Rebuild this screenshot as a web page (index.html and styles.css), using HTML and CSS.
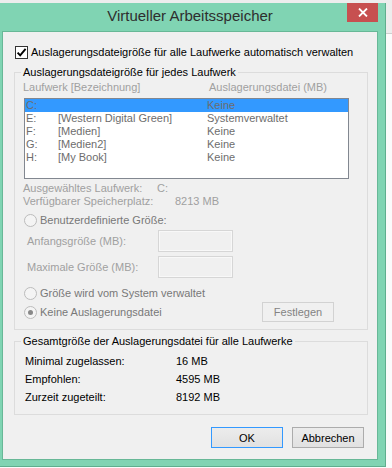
FILE: index.html
```html
<!DOCTYPE html>
<html lang="de">

<head>
    <meta charset="UTF-8">
    <meta name="viewport" content="width=device-width, initial-scale=1.0">
    <title>Virtueller Arbeitsspeicher</title>
    <link rel="stylesheet" href="styles.css">
</head>

<body>
    <div class="window">
        <div class="titlebar">
            <span class="title">Virtueller Arbeitsspeicher</span>
            <button class="close" aria-label="Schließen">
                <svg width="10" height="9" viewBox="0 0 10 9">
                    <path d="M1 0.5 L9 8.5 M9 0.5 L1 8.5" stroke="#fff" stroke-width="1.8" fill="none" />
                </svg>
            </button>
        </div>

        <div class="client">
            <!-- Automatic management -->
            <div class="auto-row">
                <span class="checkbox">
                    <svg width="11" height="11" viewBox="0 0 11 11">
                        <path d="M1.6 5.6 L4.2 8.4 L9.6 1.8" stroke="#000" stroke-width="1.9" fill="none" />
                    </svg>
                </span>
                <span>Auslagerungsdateigröße für alle Laufwerke automatisch verwalten</span>
            </div>

            <!-- Per drive -->
            <fieldset class="group group-drives">
                <legend>Auslagerungsdateigröße für jedes Laufwerk</legend>

                <div class="list-head">
                    <span class="col-drive">Laufwerk [Bezeichnung]</span>
                    <span>Auslagerungsdatei (MB)</span>
                </div>

                <ul class="drive-list">
                    <li class="selected"><span class="letter">C:</span><span class="name"></span><span>Keine</span></li>
                    <li><span class="letter">E:</span><span class="name">[Western Digital Green]</span><span>Systemverwaltet</span></li>
                    <li><span class="letter">F:</span><span class="name">[Medien]</span><span>Keine</span></li>
                    <li><span class="letter">G:</span><span class="name">[Medien2]</span><span>Keine</span></li>
                    <li><span class="letter">H:</span><span class="name">[My Book]</span><span>Keine</span></li>
                </ul>

                <div class="info-row first">
                    <span class="info-label">Ausgewähltes Laufwerk:</span>
                    <span>C:</span>
                </div>
                <div class="info-row">
                    <span class="info-label">Verfügbarer Speicherplatz:</span>
                    <span class="info-space">8213 MB</span>
                </div>

                <div class="radio-row custom">
                    <span class="radio"></span>
                    <span>Benutzerdefinierte Größe:</span>
                </div>
                <div class="size-row first">
                    <span class="size-label">Anfangsgröße (MB):</span>
                    <span class="size-input"></span>
                </div>
                <div class="size-row">
                    <span class="size-label">Maximale Größe (MB):</span>
                    <span class="size-input"></span>
                </div>

                <div class="radio-row system">
                    <span class="radio"></span>
                    <span>Größe wird vom System verwaltet</span>
                </div>
                <div class="radio-row none">
                    <span class="radio checked"></span>
                    <span>Keine Auslagerungsdatei</span>
                    <button class="btn btn-set" disabled>Festlegen</button>
                </div>
            </fieldset>

            <!-- Totals -->
            <fieldset class="group group-total">
                <legend>Gesamtgröße der Auslagerungsdatei für alle Laufwerke</legend>
                <div class="total-row first">
                    <span class="total-label">Minimal zugelassen:</span>
                    <span>16 MB</span>
                </div>
                <div class="total-row">
                    <span class="total-label">Empfohlen:</span>
                    <span>4595 MB</span>
                </div>
                <div class="total-row">
                    <span class="total-label">Zurzeit zugeteilt:</span>
                    <span>8192 MB</span>
                </div>
            </fieldset>

            <div class="actions">
                <button class="btn btn-default">OK</button>
                <button class="btn">Abbrechen</button>
            </div>
        </div>
    </div>
</body>

</html>
```

FILE: styles.css
```css
* {
    box-sizing: border-box;
}

html,
body {
    margin: 0;
}

body {
    width: 392px;
    height: 468px;
    overflow: hidden;
    background: linear-gradient(#ededed 0, #ededed 33px, #cfcfcf 33px, #cfcfcf 34px, #fbfbfb 34px);
    font-family: "Liberation Sans", Arial, sans-serif;
    font-size: 11px;
    color: #000;
}

.window {
    margin-top: 3px;
    width: 386px;
    height: 464px;
    background: #80d4b3;
    border-right: 1px solid #5fae8e;
    border-bottom: 1px solid #5fae8e;
    padding: 0 7px 6px 2px;
    display: flex;
    flex-direction: column;
}

.titlebar {
    height: 28px;
    display: grid;
    grid-template-columns: 1fr auto 1fr;
}

.title {
    grid-column: 2;
    font-size: 15px;
    line-height: 18px;
    padding-top: 4px;
    color: #2e2e2e;
    white-space: nowrap;
}

.close {
    grid-column: 3;
    justify-self: end;
    width: 31px;
    height: 19px;
    border: none;
    padding: 0;
    background: #c75050;
    display: flex;
    align-items: center;
    justify-content: center;
}

.client {
    height: 429px;
    border: 1px solid #68b897;
    background: #f0f0f0;
    padding: 14px 9px 0 11px;
    display: flex;
    flex-direction: column;
}

.auto-row {
    display: flex;
    align-items: center;
    gap: 3px;
    height: 13px;
    line-height: 13px;
    margin-left: 1px;
}

.checkbox {
    width: 13px;
    height: 13px;
    border: 1px solid #333;
    background: #fff;
    display: flex;
}

.group {
    margin: 0;
    min-width: 0;
    border: 1px solid #dcdcdc;
    padding: 0 0 7px 8px;
}

.group legend {
    padding: 0 2px;
    margin-left: -2px;
    line-height: 14px;
}

.group-drives {
    margin-top: 6px;
}

.list-head {
    display: flex;
    height: 13px;
    line-height: 13px;
    margin-top: 2px;
    color: #a0a0a0;
}

.col-drive {
    width: 186px;
}

.drive-list {
    list-style: none;
    margin: 4px 0 0 1px;
    padding: 0;
    width: 325px;
    height: 81px;
    border: 1px solid #828790;
    background: #fff;
    color: #6d6d6d;
}

.drive-list li {
    display: flex;
    height: 13px;
    line-height: 13px;
    padding-left: 1px;
}

.drive-list li.selected {
    background: #3399ff;
}

.drive-list .letter {
    width: 32px;
}

.drive-list .name {
    width: 149px;
}

.info-row {
    display: flex;
    line-height: 13px;
    color: #a0a0a0;
}

.info-row.first {
    margin-top: 3px;
}

.info-label {
    width: 134px;
}

.info-space {
    padding-left: 18px;
}

.radio-row {
    display: flex;
    align-items: center;
    height: 13px;
    line-height: 13px;
    color: #787878;
}

.radio-row.custom {
    margin-top: 6px;
}

.radio-row.system {
    margin-top: 9px;
}

.radio-row.none {
    height: 20px;
    margin-top: 2px;
}

.radio {
    width: 13px;
    height: 13px;
    flex-shrink: 0;
    margin: 0 3px 0 1px;
    border-radius: 50%;
    border: 1px solid #bcbcbc;
    background: #f4f4f4;
    display: flex;
    align-items: center;
    justify-content: center;
}

.radio.checked::after {
    content: "";
    width: 5px;
    height: 5px;
    border-radius: 50%;
    background: #888;
}

.size-row {
    display: flex;
    align-items: center;
    height: 22px;
    margin-top: 4px;
    color: #a0a0a0;
}

.size-row.first {
    margin-top: 3px;
}

.size-label {
    width: 135px;
    padding-left: 4px;
    line-height: 13px;
}

.size-input {
    width: 75px;
    height: 22px;
    border: 1px solid #d6d6d6;
    background: #f0f0f0;
    box-shadow: inset 0 0 0 1px #f8f8f8;
}

.btn {
    width: 72px;
    height: 21px;
    padding: 0;
    font-family: inherit;
    font-size: 11px;
    color: #000;
    border: 1px solid #acacac;
    background: linear-gradient(#ececec, #e1e1e1);
}

.btn-set {
    margin-left: auto;
    margin-right: 33px;
    height: 20px;
    color: #838383;
    border-color: #d2d2d2;
    background: #f0f0f0;
}

.btn-default {
    border-color: #3399ff;
}

.group-total {
    margin-top: 4px;
    padding-bottom: 8px;
}

.total-row {
    display: flex;
    line-height: 18px;
    padding-left: 2px;
}

.total-row.first {
    margin-top: 4px;
}

.total-label {
    width: 151px;
}

.actions {
    display: flex;
    justify-content: flex-end;
    gap: 9px;
    margin: 12px 4px 0 0;
}
```
